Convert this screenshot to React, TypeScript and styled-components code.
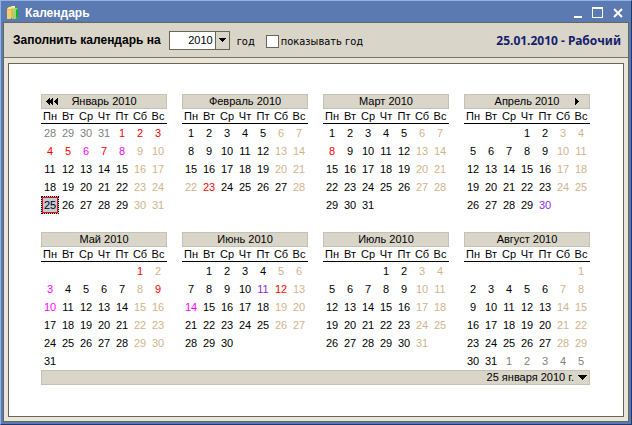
import React, { useState } from 'react';
import styled, { createGlobalStyle } from 'styled-components';

const GlobalStyle = createGlobalStyle`
  * { box-sizing: border-box; }
  html, body, #root { height: 100%; }
  body { margin: 0; font: 11px/13px "Liberation Sans", Arial, sans-serif; color: #000; }
  button { padding: 0; border: 0; background: none; font: inherit; color: inherit; }
`;

const Window = styled.div`
  display: flex;
  flex-direction: column;
  min-height: 100%;
  padding: 2px;
  background: #5b7ab2;
  border: 1px solid #8fb3ea;
  border-right-color: #1d3a70;
  border-bottom-color: #1d3a70;
`;

const TitleBar = styled.header`
  display: flex;
  align-items: center;
  height: 19px;
  padding: 0 4px;
  color: #fff;
`;

const Title = styled.h1`
  flex: 1;
  margin: 0 0 0 6px;
  font: bold 12px/14px "Liberation Sans", Arial, sans-serif;
`;

const WindowButtons = styled.div`
  display: flex;
  gap: 6px;
`;

const WindowButton = styled.button`
  display: grid;
  place-items: center;
  width: 14px;
  height: 14px;
`;

const Client = styled.div`
  flex: 1;
  display: flex;
  flex-direction: column;
  background: #ece6da;
  border: 1px solid #66665a;
`;

const Toolbar = styled.div`
  display: flex;
  align-items: center;
  height: 35px;
  padding: 0 7px 0 9px;
  background: #d9d5c9;
  border-bottom: 1px solid #76746a;
`;

const FieldLabel = styled.label`
  font-size: 12px;
  font-weight: bold;
`;

const YearField = styled.div`
  display: flex;
  width: 61px;
  height: 19px;
  margin: 0 7px 0 8px;
  background: #fff;
  border: 1px solid #66665a;
`;

const YearInput = styled.input`
  flex: 1;
  min-width: 0;
  padding: 0 2px 0 0;
  border: 0;
  outline: 0;
  font: inherit;
  text-align: right;
`;

const DropButton = styled.button`
  display: grid;
  place-items: center;
  width: 14px;
  background: #d9d5c9;
  border-left: 1px solid #66665a;
`;

const Unit = styled.span`
  padding-top: 2px;
  font: 11px/13px "DejaVu Sans Condensed", Tahoma, sans-serif;
`;

const CheckLabel = styled.label`
  display: flex;
  align-items: center;
  gap: 2px;
  margin-left: 11px;
  padding-top: 2px;
  font: 11px/13px "DejaVu Sans Condensed", Tahoma, sans-serif;
`;

const CheckBox = styled.input`
  appearance: none;
  width: 13px;
  height: 13px;
  margin: 0;
  background: #fff;
  border: 1px solid #66665a;
  &:checked { box-shadow: inset 0 0 0 3px #fff; background: #000; }
`;

const DayStatus = styled.output`
  margin-left: auto;
  padding-top: 2px;
  color: #14206c;
  font: bold 12px/14px "Noto Sans", Tahoma, sans-serif;
`;

const Panel = styled.main`
  flex: 1;
  margin: 5px 4px 4px;
  padding: 30px 33px 31px 32px;
  background: #fff;
  border: 1px solid #66665a;
`;

const Months = styled.div`
  display: grid;
  grid-template-columns: repeat(4, 1fr);
  column-gap: 15px;
`;

const Month = styled.section`
  display: flex;
  flex-direction: column;
`;

const MonthHead = styled.div`
  display: grid;
  grid-template-columns: 20px 1fr 20px;
  align-items: center;
  height: 15px;
  background: #d9d5c9;
  border: 1px solid #c5c1b4;
`;

const MonthTitle = styled.h2`
  grid-column: 2;
  margin: 0;
  font-size: 11px;
  font-weight: normal;
  text-align: center;
  white-space: nowrap;
`;

const NavButton = styled.button`
  display: grid;
  place-items: center;
  height: 13px;
`;

const Days = styled.table`
  width: 100%;
  table-layout: fixed;
  border-spacing: 0;
`;

const Weekday = styled.th`
  height: 15px;
  padding: 1px 0 0;
  border-bottom: 1px solid #000;
  font-weight: normal;
  line-height: 13px;
`;

const Cell = styled.td`
  height: 18px;
  padding: 0;
`;

type Kind = 'work' | 'weekend' | 'holiday' | 'moved' | 'short' | 'other';

const dayColors: Record<Kind, string> = {
  work: '#000',
  weekend: '#d2b48c',
  holiday: '#f00',
  moved: '#f0f',
  short: '#8a2be2',
  other: '#808080',
};

const Day = styled.button<{ $kind: Kind; $selected: boolean }>`
  display: block;
  width: 100%;
  height: 18px;
  line-height: 16px;
  text-align: center;
  color: ${p => dayColors[p.$kind]};
  ${p => p.$selected && `
    background: #c0ccd6;
    border: 1px dotted #000;
    box-shadow: inset 0 0 0 1px #f00;
    line-height: 14px;
  `}
`;

const Footer = styled.footer`
  display: flex;
  align-items: center;
  justify-content: flex-end;
  gap: 3px;
  height: 15px;
  padding-right: 2px;
  background: #d9d5c9;
  border: 1px solid #c5c1b4;
`;

const weekdays = ['Пн', 'Вт', 'Ср', 'Чт', 'Пт', 'Сб', 'Вс'];

interface MonthInfo {
  name: string;
  start: number;
  length: number;
  before?: number[];
  after?: number[];
  marks?: Record<number, Kind>;
}

const months: MonthInfo[] = [
  {
    name: 'Январь', start: 4, length: 31, before: [28, 29, 30, 31],
    marks: { 1: 'holiday', 2: 'holiday', 3: 'holiday', 4: 'holiday', 5: 'holiday', 6: 'moved', 7: 'holiday', 8: 'moved' },
  },
  { name: 'Февраль', start: 0, length: 28, marks: { 22: 'weekend', 23: 'holiday', 27: 'work' } },
  { name: 'Март', start: 0, length: 31, marks: { 8: 'holiday' } },
  { name: 'Апрель', start: 3, length: 30, marks: { 30: 'short' } },
  { name: 'Май', start: 5, length: 31, marks: { 1: 'holiday', 3: 'moved', 9: 'holiday', 10: 'moved' } },
  { name: 'Июнь', start: 1, length: 30, marks: { 11: 'short', 12: 'holiday', 14: 'moved' } },
  { name: 'Июль', start: 3, length: 31 },
  { name: 'Август', start: 6, length: 31, after: [1, 2, 3, 4, 5] },
];

interface DayInfo {
  day: number;
  kind: Kind;
}

function buildWeeks(m: MonthInfo): (DayInfo | null)[][] {
  const cells: (DayInfo | null)[] = [];
  for (let i = 0; i < m.start; i++) {
    cells.push(m.before ? { day: m.before[i], kind: 'other' } : null);
  }
  for (let day = 1; day <= m.length; day++) {
    const usual: Kind = cells.length % 7 > 4 ? 'weekend' : 'work';
    cells.push({ day, kind: m.marks?.[day] ?? usual });
  }
  m.after?.forEach(day => cells.push({ day, kind: 'other' }));
  while (cells.length < 42) cells.push(null);
  return Array.from({ length: 6 }, (_, w) => cells.slice(w * 7, w * 7 + 7));
}

function AppIcon() {
  return (
    <svg width="12" height="14" viewBox="0 0 12 14" aria-hidden="true">
      <path d="M3 1l2-1h3v10H3z" fill="#fff0a8" />
      <path d="M0 3l2-2h4v11H0z" fill="#f2b84b" />
      <path d="M0 3l2-2h4L4 3z" fill="#ffe9a0" />
      <path d="M0 4h4v9H0z" fill="#f9cd66" />
      <path d="M5 5l2-3h4v9l-2 2H5z" fill="#8fe26a" />
      <path d="M5 5h4v8H5z" fill="#a9cf74" />
      <path d="M9 4l2-2v9l-2 2z" fill="#12b52a" />
    </svg>
  );
}

function MonthView({ month, index, selected, onSelect }: {
  month: MonthInfo;
  index: number;
  selected: string;
  onSelect: (key: string) => void;
}) {
  return (
    <Month>
      <MonthHead>
        {index === 0 && (
          <NavButton aria-label="Назад">
            <svg width="13" height="7" viewBox="0 0 13 7" shapeRendering="crispEdges">
              <path d="M0 3h1V2h1V1h1V0h1v2h1V1h1V0h1v7H6V6H5V5H4v2H3V6H2V5H1V4H0z" />
              <path d="M8 3h1V2h1V1h1V0h1v7h-1V6h-1V5H9V4H8z" />
            </svg>
          </NavButton>
        )}
        <MonthTitle>{month.name} 2010</MonthTitle>
        {index === 3 && (
          <NavButton aria-label="Вперёд">
            <svg width="8" height="7" viewBox="0 0 8 7" shapeRendering="crispEdges">
              <path d="M0 0h1v1h1v1h1v1h1v1H3v1H2v1H1v1H0z" />
            </svg>
          </NavButton>
        )}
      </MonthHead>
      <Days>
        <thead>
          <tr>{weekdays.map(name => <Weekday key={name} scope="col">{name}</Weekday>)}</tr>
        </thead>
        <tbody>
          {buildWeeks(month).map((week, w) => (
            <tr key={w}>
              {week.map((d, i) => {
                const key = `${index}-${w}-${i}`;
                return (
                  <Cell key={i}>
                    {d && (
                      <Day $kind={d.kind} $selected={selected === key} onClick={() => onSelect(key)}>
                        {d.day}
                      </Day>
                    )}
                  </Cell>
                );
              })}
            </tr>
          ))}
        </tbody>
      </Days>
    </Month>
  );
}

export default function App() {
  const [selected, setSelected] = useState('0-4-0');
  const [year, setYear] = useState('2010');

  return (
    <>
      <GlobalStyle />
      <Window>
        <TitleBar>
          <AppIcon />
          <Title>Календарь</Title>
          <WindowButtons>
            <WindowButton aria-label="Свернуть">
              <svg width="12" height="12" shapeRendering="crispEdges"><path d="M2 9h8v2H2z" fill="#fff" /></svg>
            </WindowButton>
            <WindowButton aria-label="Развернуть">
              <svg width="12" height="12" shapeRendering="crispEdges"><path d="M0 0h11v11H0zM1 2v8h9V2z" fill="#fff" fillRule="evenodd" /></svg>
            </WindowButton>
            <WindowButton aria-label="Закрыть">
              <svg width="12" height="12"><path d="M2 2l8 8M10 2l-8 8" stroke="#fff" strokeWidth="2" /></svg>
            </WindowButton>
          </WindowButtons>
        </TitleBar>
        <Client>
          <Toolbar>
            <FieldLabel htmlFor="year">Заполнить календарь на</FieldLabel>
            <YearField>
              <YearInput id="year" value={year} onChange={e => setYear(e.target.value)} />
              <DropButton aria-label="Выбрать год">
                <svg width="7" height="4" shapeRendering="crispEdges"><path d="M0 0h7L3.5 4z" /></svg>
              </DropButton>
            </YearField>
            <Unit>год</Unit>
            <CheckLabel>
              <CheckBox type="checkbox" />
              показывать год
            </CheckLabel>
            <DayStatus>25.01.2010 - Рабочий</DayStatus>
          </Toolbar>
          <Panel>
            <Months>
              {months.map((m, i) => (
                <MonthView key={m.name} month={m} index={i} selected={selected} onSelect={setSelected} />
              ))}
            </Months>
            <Footer>
              25 января 2010 г.
              <NavButton aria-label="Выбрать дату">
                <svg width="10" height="5" shapeRendering="crispEdges"><path d="M0 0h10L5 5z" /></svg>
              </NavButton>
            </Footer>
          </Panel>
        </Client>
      </Window>
    </>
  );
}
